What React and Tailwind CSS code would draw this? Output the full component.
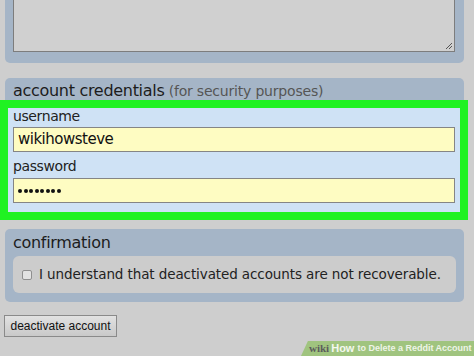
import React from "react";

const verdana = { fontFamily: '"DejaVu Sans", Verdana, sans-serif' };
const arial = { fontFamily: '"Liberation Sans", Arial, sans-serif' };

function ResizeGrip() {
  return (
    <svg width="9" height="9" viewBox="0 0 9 9" className="absolute bottom-[1px] right-[1px]">
      <path d="M8 2 L2 8 M8 5 L5 8" stroke="#555" strokeWidth="1" />
    </svg>
  );
}

function PasswordDots({ count }) {
  return (
    <div className="flex gap-[1.5px]">
      {Array.from({ length: count }).map((_, i) => (
        <div key={i} className="w-[4px] h-[4px] rounded-full bg-[#111]" />
      ))}
    </div>
  );
}

function Field({ label, children, first }) {
  return (
    <div className={first ? "" : "pt-[6px]"}>
      <div className="text-[14px] leading-[16px] tracking-[-0.4px] text-[#222] h-[16px]" style={verdana}>
        {label}
      </div>
      <div
        className={`${first ? "mt-[3px]" : "mt-[4px]"} h-[25px] w-[442px] border border-[#858585] bg-[#fefcc2] flex items-center pl-[4px] text-[15px] tracking-[-0.5px] text-[#111]`}
        style={verdana}
      >
        {children}
      </div>
    </div>
  );
}

function App() {
  return (
    <div className="relative w-[474px] h-[356px] overflow-hidden bg-[#cecece]">
      {/* top panel with textarea */}
      <div className="ml-[5px] w-[459px] h-[63px] rounded-b-[5px] bg-[#a5b5c7] px-[8px]">
        <div className="relative h-[52px] w-[442px] border-x border-b border-[#7d7d7d] bg-[#d0d0d0]">
          <ResizeGrip />
        </div>
      </div>

      {/* credentials panel header */}
      <div
        className="mt-[15px] ml-[5px] w-[459px] h-[22px] rounded-t-[5px] bg-[#a5b5c7] pl-[8px] pt-[3px] leading-[20px] whitespace-nowrap"
        style={verdana}
      >
        <span className="text-[16px] tracking-[-0.3px] text-[#1c1c1c]">account credentials</span>
        <span className="text-[14px] tracking-[-0.2px] text-[#555]"> (for security purposes)</span>
      </div>

      {/* highlighted fields */}
      <div className="w-[468px] h-[120px] border-[8px] border-[#20f222]">
        <div className="h-full bg-[#cfe2f5] pl-[5px] pr-[3px]">
          <Field label="username" first>wikihowsteve</Field>
          <Field label="password">
            <PasswordDots count={8} />
          </Field>
        </div>
      </div>

      {/* confirmation panel */}
      <div className="mt-[9px] ml-[5px] w-[459px] h-[73px] rounded-[5px] bg-[#a5b5c7] px-[8px] pt-[4px]" style={verdana}>
        <div className="text-[16px] leading-[20px] tracking-[-0.3px] text-[#1c1c1c]">confirmation</div>
        <div className="mt-[3px] h-[37px] rounded-[6px] bg-[#cccccc] flex items-center pl-[9px] gap-[7px]">
          <div className="w-[10px] h-[10px] rounded-[2px] border border-[#8f8f8f] bg-[#e2e2e2]" />
          <span className="text-[13.5px] tracking-[-0.1px] text-[#222] whitespace-nowrap">
            I understand that deactivated accounts are not recoverable.
          </span>
        </div>
      </div>

      {/* button */}
      <div className="mt-[13px] ml-[4px]">
        <div
          className="w-[113px] h-[22px] border border-[#8a8a8a] bg-gradient-to-b from-[#e2e2e2] to-[#c9c9c9] flex items-center justify-center text-[12px] text-[#111]"
          style={arial}
        >
          deactivate account
        </div>
      </div>

      {/* watermark */}
      <div className="absolute bottom-0 right-0 w-[173px] h-[15px] bg-[#a0c47f] [clip-path:polygon(4%_0,100%_0,100%_100%,0_100%)] flex items-center pl-[8px] whitespace-nowrap">
        <span className="text-[11px] font-bold text-[#5c5c5c]" style={{ fontFamily: '"Liberation Serif", serif' }}>wiki</span>
        <span className="ml-[2px] text-[11px] font-bold text-[#f4f8ef]" style={arial}>How</span>
        <span className="ml-[3px] text-[9px] font-bold text-[#eef4e8]" style={arial}>to Delete a Reddit Account</span>
      </div>
    </div>
  );
}

export default App;
